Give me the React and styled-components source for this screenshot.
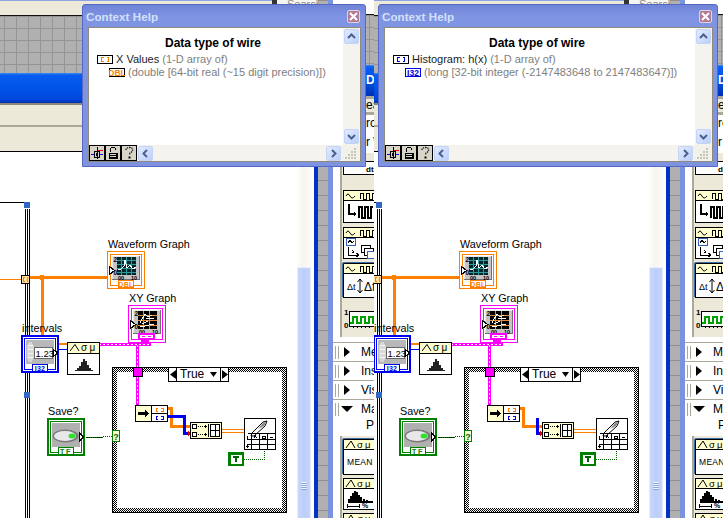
import React from "react";
import styled, { createGlobalStyle } from "styled-components";

const Global = createGlobalStyle`
  html, body { margin: 0; padding: 0; background: #fff; overflow: hidden; }
  #root { width: 723px; height: 518px; }
  * { box-sizing: border-box; }
`;
const UI = `"Liberation Sans", Arial, sans-serif`;
const TOP = 151;

const Page = styled.div`
  display: flex; width: 723px; height: 518px; overflow: hidden; font-family: ${UI}; background: #fff;
`;
const Panel = styled.section`
  position: relative; flex: 0 0 ${p => p.$w}px; width: ${p => p.$w}px; height: 518px; overflow: hidden; display: flex;
`;

/* ---------- background window strips ---------- */
const DiagramColumn = styled.div`
  flex: 0 0 ${p => p.$w}px; width: ${p => p.$w}px; height: 518px; display: flex; flex-direction: column; overflow: hidden;
`;
const MenuBand = styled.div`
  height: 16px; flex: none; background: #ece9d8; border-top: 1px solid #8ea2e6; border-bottom: 1px solid #111;
`;
const SearchHint = styled.span`
  position: absolute; left: ${p => p.$x}px; top: 0; width: 46px; height: 4px; padding-left: 10px; font-size: 11px; line-height: 9px; color: #8a8a8a; background: #f6f5ef;
  white-space: nowrap; overflow: hidden; border-left: 5px solid #333;
`;
const GridBand = styled.div`
  height: 57px; flex: none; background-color: #b0b0b0;
  background-image: linear-gradient(#949494 1px, transparent 1px), linear-gradient(90deg, #949494 1px, transparent 1px);
  background-size: 12px 12px; background-position: 4px 0;
`;
const BlueBand = styled.div`
  height: 30px; flex: none; background: linear-gradient(#3a8cf5 0, #0a5cf0 2px, #0054e6 50%, #0048dc 88%, #0030b0 100%);
`;
const RuleBand = styled.div`
  height: ${p => p.$h}px; flex: none; background: #ece9d8; border-top: 2px solid ${p => p.$line};
`;
const Canvas = styled.div`
  position: relative; flex: none; width: 296px; height: ${518 - TOP}px; margin-left: ${p => p.$shift}px; background: #fff;
  border-top: 1px solid #000;
`;
const WireLayer = styled.svg`
  position: absolute; left: 0; top: -1px; width: 296px; height: ${518 - TOP}px; display: block; shape-rendering: crispEdges;
`;

/* ---------- scrollbar & rulers ---------- */
const ScrollColumn = styled.div`
  flex: 0 0 18px; height: 518px; background: linear-gradient(90deg, #fff, #f6f4ec 40%, #fff); display: flex; flex-direction: column; padding-top: 267px;
`;
const ScrollThumb = styled.div`
  flex: 1; width: 14px; margin-left: 1px; background: linear-gradient(90deg, #c8d6fb, #bccdfa 50%, #c5d4fb); border: 1px solid #e8eefe; border-bottom: 0;
  display: flex; flex-direction: column; align-items: center; padding-top: 214px; gap: 1px;
`;
const GripLine = styled.i`
  display: block; width: 6px; height: 1px; background: #eef3ff; box-shadow: 0 1px 0 #8ea6e0;
`;
const Stripe = styled.div`
  flex: 0 0 4px; height: 518px; background: #0032c8;
`;
const Ruler = styled.div`
  flex: 0 0 10px; height: 518px; background-color: #b0b0b0;
  background-image: linear-gradient(#8f8f8f 1px, transparent 1px); background-size: 100% 15px;
`;
const Accent = styled.div`
  flex: 0 0 5px; height: 518px; background: #7b92de;
`;

/* ---------- palette ---------- */
const Palette = styled.aside`
  flex: 0 0 60px; width: 60px; height: 518px; background: #fff; display: flex; flex-direction: column; overflow: hidden;
`;
const PaletteGrid = styled.div`
  height: 51px; flex: none; background-color: #b0b0b0; border-top: 1px solid #111;
  background-image: linear-gradient(#949494 1px, transparent 1px), linear-gradient(90deg, #949494 1px, transparent 1px);
  background-size: 12px 12px;
`;
const PaletteTopBlank = styled.div`
  height: 14px; flex: none; background: #fff;
`;
const PaletteBlue = styled.div`
  height: 31px; flex: none; background: linear-gradient(#3a8cf5 0, #0a5cf0 2px, #0054e6 50%, #0030b0 100%);
  color: #fff; font-size: 12px; font-weight: bold; line-height: 31px; padding-left: 33px; white-space: nowrap; overflow: hidden;
`;
const PaletteText = styled.div`
  height: ${p => p.$h}px; flex: none; background: ${p => p.$bg}; border-bottom: ${p => (p.$rule ? "3px solid #aca899" : "0")};
  font-size: 12px; line-height: ${p => p.$h - 3}px; color: #000; padding-left: 33px; white-space: nowrap; overflow: hidden;
`;
const Section = styled.div`
  flex: none; background: #ece9d8; border-left: 2px solid #aca899; margin-left: ${p => p.$m}px; padding: 3px 0 0 ${p => p.$pl}px;
  display: flex; flex-direction: column; height: ${p => p.$h}px; overflow: hidden;
`;
const Card = styled.div`
  width: 60px; height: ${p => p.$h}px; flex: none; background: #fff; border: 1px solid #000; border-right: 0;
  margin-top: ${p => p.$mt}px;
  display: flex; flex-direction: column;
  ${p => p.$sel && `box-shadow: -1px -1px 0 #3a6ea5; border-radius: 2px 0 0 0;`}
`;
const CardHead = styled.div`
  height: 10px; flex: none; background: #ffffd0; border-bottom: 1px solid #000; display: flex;
`;
const CardBody = styled.div`
  flex: 1; display: flex; align-items: center; padding-left: 2px; min-height: 0;
`;
const MeanText = styled.span`
  font-size: 8.5px; letter-spacing: 0.3px; padding-left: 1px; color: #000;
`;
const PlotTile = styled.div`
  width: 60px; height: 35px; flex: none; background: #ece9d8; display: flex; align-items: center; margin-top: 2px;
`;
const SubPalette = styled.div`
  flex: none; height: 19px; border-top: 1px solid #aca899; background: #fff; display: flex; align-items: center; padding-left: 2px; overflow: hidden;
`;
const Bars = styled.i`
  display: block; width: 4px; height: 13px; border-left: 1px solid #aca899; border-right: 1px solid #aca899; flex: none;
`;
const Tri = styled.i`
  display: block; flex: none; margin-left: 5px; width: 0; height: 0;
  ${p => p.$open
    ? `border-left: 6px solid transparent; border-right: 6px solid transparent; border-top: 6px solid #000; margin-left: 2px; margin-right: 3px;`
    : `border-top: 5px solid transparent; border-bottom: 5px solid transparent; border-left: 6px solid #000; margin-right: 6px;`}
`;
const SubLabel = styled.span`
  font-size: 12px; padding-left: 5px; white-space: nowrap; color: #000;
`;
const SubLeaf = styled.div`
  flex: none; height: 18px; padding-left: 28px; display: flex; background: #fff;
`;
const Spacer = styled.div`
  flex: none; height: ${p => p.$h}px; background: ${p => p.$bg || "#fff"};
`;

/* ---------- diagram nodes ---------- */
const Node = styled.div`
  position: absolute; left: ${p => p.$x}px; top: ${p => p.$y - TOP - 1}px; width: ${p => p.$w}px; height: ${p => p.$h}px; line-height: 0;
  svg { display: block; }
`;
const NodeLabel = styled.span`
  position: absolute; left: ${p => p.$x}px; top: ${p => p.$y - TOP - 1}px; font-size: 10.8px; line-height: 14px; color: #000; white-space: nowrap;
`;
const CaseFrame = styled.div`
  position: absolute; left: 112px; top: ${367 - TOP - 1}px; width: 175px; height: 146px; border: 1px solid #000; padding: 4px;
  background: conic-gradient(#000 25%, #fff 0 50%, #000 0 75%, #fff 0) 0 0 / 2px 2px;
`;
const CaseInner = styled.div`
  width: 100%; height: 100%; background: #fff;
`;
const Selector = styled.div`
  position: absolute; left: 168px; top: ${367 - TOP - 1}px; width: 61px; height: 15px; background: #fff; border: 1px solid #000; display: flex; align-items: stretch;
`;
const SelArrow = styled.span`
  flex: 0 0 8px; display: flex; align-items: center; justify-content: center; background: #fff;
  border-${p => (p.$right ? "left" : "right")}: 1px solid #000;
`;
const SelText = styled.span`
  flex: 1; font-size: 12px; line-height: 13px; padding-left: 3px; display: flex; justify-content: space-between; align-items: center; padding-right: 3px;
`;

/* ---------- help window ---------- */
const HelpWindow = styled.div`
  position: absolute; left: ${p => p.$x}px; top: 4px; width: ${p => p.$w}px; height: 163px; padding: 0 4px 4px 5px;
  background: linear-gradient(#6f84d8, #7f94e2 12px, #7e92e0); border: 1px solid #5468c4; border-radius: 3px 3px 0 0;
  display: flex; flex-direction: column;
`;
const HelpTitle = styled.header`
  height: 22px; flex: none; display: flex; align-items: center; justify-content: space-between; padding: 2px 1px 0 0; margin-left: -2px;
`;
const HelpTitleText = styled.span`
  font-size: 11.5px; font-weight: bold; color: #d3e0fa; letter-spacing: 0.1px;
`;
const CloseBox = styled.span`
  width: 13px; height: 13px; margin-top: -2px; background: #b27a94; border: 1px solid #e3d3e0; border-radius: 2px; display: flex; align-items: center; justify-content: center;
`;
const HelpBody = styled.div`
  flex: 1; min-height: 0; background: #f5f4ee; border: 1px solid #8e8b7c; display: flex; flex-direction: column;
`;
const HelpMain = styled.div`
  flex: 1; min-height: 0; display: flex;
`;
const HelpContent = styled.div`
  flex: 1; background: #fff; padding: 8px 0 0 8px; font-size: 11px; color: #808080;
`;
const HelpHeading = styled.h4`
  margin: 0 0 3px; padding-right: 14px; text-align: center; font-size: 12px; line-height: 14px; font-weight: bold; color: #000;
`;
const HelpRow = styled.div`
  display: flex; align-items: center; height: 13px; white-space: nowrap; margin-left: ${p => p.$indent}px; gap: 3px; line-height: 13px;
`;
const Dark = styled.span`
  color: #222;
`;
const VBar = styled.div`
  flex: 0 0 17px; background: #f4f3ee; display: flex; flex-direction: column; justify-content: space-between; padding: 1px 0 1px 1px;
`;
const ScrollBtn = styled.span`
  width: 15px; height: 15px; background: linear-gradient(135deg, #e3ebfe, #bccffb); border: 1px solid #c4d4f8; border-radius: 2px; display: flex; align-items: center; justify-content: center; flex: none;
`;
const HelpFoot = styled.div`
  height: 16px; flex: none; display: flex; align-items: center; background: #f2f1ea;
`;
const ToolBtn = styled.span`
  width: 16px; height: 16px; flex: none; background: #d8d5c8; border: 1px solid #000; margin-right: ${p => (p.$last ? "1px" : "0")};
  line-height: 0;
`;
const HTrack = styled.div`
  flex: 1; display: flex; justify-content: space-between; padding-right: 1px; background: #f4f3ee;
`;
const ResizeGrip = styled.span`
  flex: 0 0 18px; height: 16px; display: flex; align-items: center; justify-content: center; line-height: 0;
`;

/* ---------- drawings ---------- */
const Chevron = ({ dir }) => {
  const d = { up: "M3 8 L6.5 4.5 L10 8", down: "M3 5 L6.5 8.5 L10 5", left: "M8 3 L4.5 6.5 L8 10", right: "M5 3 L8.5 6.5 L5 10" }[dir];
  return (
    <svg width="13" height="13" viewBox="0 0 13 13"><path d={d} fill="none" stroke="#4a618f" strokeWidth="2" /></svg>
  );
};
const ArrayTag = ({ color, w = 16, inner }) => (
  <svg width={w} height="9" viewBox={`0 0 ${w} 9`} shapeRendering="crispEdges" style={{ flex: "none" }}>
    <rect x=".5" y=".5" width={w - 1} height="8" fill="#fff" stroke={inner && color !== "#ff8000" ? color : "#000"} />
    {inner ? (
      <text x={w / 2} y="7.8" textAnchor="middle" fontFamily={UI} fontSize="8.5" fontWeight="bold" fill={color}>{inner}</text>
    ) : (
      <path d={`M6.5 2.5 H4.5 V6.5 H6.5 M${w - 6.5} 2.5 H${w - 4.5} V6.5 H${w - 6.5}`} fill="none" stroke={color} strokeWidth="1" />
    )}
  </svg>
);
const WireIcon = () => (
  <svg width="14" height="14" viewBox="0 0 14 14" shapeRendering="crispEdges">
    <path d="M1 8.5 H13" stroke="#00f" /><path d="M7 4.5 H13" stroke="#e00" />
    <rect x="4.5" y="5.5" width="5" height="6" fill="#d8d5c8" stroke="#000" /><rect x="6" y="7" width="2" height="3" fill="#000" />
    <path d="M7 1 V13" stroke="#000" />
  </svg>
);
const LockIcon = () => (
  <svg width="14" height="14" viewBox="0 0 14 14" shapeRendering="crispEdges">
    <path d="M4.5 6 V3.5 Q4.5 1.5 7 1.5 Q9.5 1.5 9.5 3.5" fill="none" stroke="#000" />
    <rect x="2.5" y="6.5" width="9" height="6" fill="#000" /><path d="M4 8.5 H10 M4 10.5 H10" stroke="#d8d5c8" />
  </svg>
);
const HelpIcon = () => (
  <svg width="14" height="14" viewBox="0 0 14 14">
    <path d="M4 4 Q4 1.5 7.5 1.5 Q11 1.5 10.5 4.5 Q10 6 8 7 L7.5 9" fill="none" stroke="#222" strokeWidth="1.4" strokeDasharray="1.4 .8" />
    <rect x="6.5" y="10.5" width="2" height="2" fill="#000" />
  </svg>
);
const Grip = () => (
  <svg width="12" height="12" viewBox="0 0 12 12" fill="#c6c4b6" shapeRendering="crispEdges">
    <rect x="9" y="1" width="2" height="2" /><rect x="6" y="4" width="2" height="2" /><rect x="9" y="4" width="2" height="2" />
    <rect x="3" y="7" width="2" height="2" /><rect x="6" y="7" width="2" height="2" /><rect x="9" y="7" width="2" height="2" />
    <rect x="0" y="10" width="2" height="2" /><rect x="3" y="10" width="2" height="2" /><rect x="6" y="10" width="2" height="2" /><rect x="9" y="10" width="2" height="2" />
  </svg>
);
const XMark = () => (
  <svg width="9" height="9" viewBox="0 0 9 9"><path d="M1 1 L8 8 M8 1 L1 8" stroke="#fff" strokeWidth="2.2" /></svg>
);

const GraphTerminal = ({ color, grid, plot, tag, pink }) => (
  <svg width="38" height="38" viewBox="0 0 38 38" shapeRendering="crispEdges" fontFamily={UI}>
    <rect x=".5" y=".5" width="37" height="37" fill="#fff" stroke={color} />
    <rect x="3.5" y="3.5" width="31" height="31" fill="#fff" stroke={color} />
    <rect x="5" y="5" width="28" height="24" fill="#c4c4c4" />
    <path d="M5 5 H33 M5 5 V29" stroke="#e8e8e8" /><path d="M32.5 5 V29 M5 28.5 H33" stroke="#707070" />
    <rect x="10" y="6" width="19" height="18" fill={pink ? "#000" : "#00282c"} />
    <path d={grid} stroke={pink ? "#e88a3c" : "#2c9c9c"} fill="none" />
    <path d={plot} stroke="#fff" fill="none" />
    <text x="6.5" y="11" fontSize="6.5" fontWeight="bold">2</text>
    <text x="6.5" y="24" fontSize="6.5" fontWeight="bold">0</text>
    <text x="11" y="29" fontSize="5.5" fontWeight="bold">00</text><text x="24" y="29" fontSize="5.5" fontWeight="bold">10</text>
    <path d="M2.5 15.5 L7.5 19.5 L2.5 23.5 Z" fill="#fff" stroke="#000" />
    {tag && (<g><rect x="11.5" y="29.5" width="15" height="7" fill="#fff" stroke={color} /><text x="19" y="36" textAnchor="middle" fontSize="7" fontWeight="bold" fill={color} letterSpacing=".3">{tag}</text></g>)}
    {pink && (<g><rect x="11" y="29" width="15" height="5" fill="#fff" stroke="#ff00ff" strokeWidth="2" /><path d="M14 31.5 H17 M20 31.5 H23" stroke="#ff00ff" /><rect x="13" y="34" width="8" height="4" fill="#ff00ff" /></g>)}
  </svg>
);
const NumericTerminal = () => (
  <svg width="38" height="38" viewBox="0 0 38 38" shapeRendering="crispEdges" fontFamily={UI}>
    <rect x="1" y="1" width="36" height="36" fill="#fff" stroke="#0000f0" strokeWidth="2" />
    <rect x="3.5" y="3.5" width="31" height="31" fill="#fff" stroke="#0000f0" />
    <rect x="5" y="5" width="28" height="24" fill="#b8b8b8" />
    <ellipse cx="9.5" cy="17" rx="4" ry="10" fill="#d8d8d8" /><path d="M7 10 H12 M7 14 H12 M7 18 H12 M7 22 H12" stroke="#f4f4f4" />
    <rect x="13.5" y="12.5" width="18" height="11" fill="#fff" stroke="#666" />
    <text x="14.5" y="21.5" fontSize="9.5" fill="#000">1.23</text>
    <path d="M32.5 14.5 L36.5 18 L32.5 21.5 Z" fill="#fff" stroke="#000" />
    <rect x="11.5" y="29.5" width="15" height="7" fill="#fff" stroke="#0000f0" />
    <text x="19" y="36" textAnchor="middle" fontSize="7" fontWeight="bold" fill="#0000f0" letterSpacing=".3">I32</text>
  </svg>
);
const BoolTerminal = () => (
  <svg width="38" height="38" viewBox="0 0 38 38" shapeRendering="crispEdges" fontFamily={UI}>
    <rect x="1" y="1" width="36" height="36" fill="#fff" stroke="#008000" strokeWidth="2" />
    <rect x="3.5" y="3.5" width="31" height="31" fill="#fff" stroke="#008000" />
    <rect x="5" y="5" width="28" height="24" fill="#b0b0b0" />
    <ellipse cx="18.5" cy="18" rx="13" ry="6.5" fill="#7a7a7a" shapeRendering="auto" />
    <ellipse cx="18" cy="18" rx="11" ry="5" fill="#e8e8e8" shapeRendering="auto" />
    <ellipse cx="25" cy="18" rx="3.5" ry="2.5" fill="#30e030" shapeRendering="auto" />
    <path d="M32.5 15 L36.5 19 L32.5 23 Z" fill="#fff" stroke="#000" />
    <rect x="11.5" y="29.5" width="15" height="7" fill="#fff" stroke="#008000" />
    <text x="19" y="36" textAnchor="middle" fontSize="7" fontWeight="bold" fill="#008000" letterSpacing="1.6">TF</text>
  </svg>
);
const StatsNode = () => (
  <svg width="33" height="33" viewBox="0 0 33 33" shapeRendering="crispEdges" fontFamily={UI}>
    <rect x=".5" y=".5" width="32" height="32" fill="#fff" stroke="#000" />
    <rect x="1" y="1" width="31" height="10" fill="#ffffd0" /><path d="M0 11.5 H33" stroke="#000" />
    <path d="M3 9 L8 2.5 L12 9" fill="none" stroke="#000" shapeRendering="auto" />
    <text x="14" y="9" fontSize="10">σ</text><text x="22.5" y="9" fontSize="10">μ</text>
    <path d="M8 28.5 H26 M11 28 V26 M13 28 V24 M15 28 V20 M17 28 V17 M19 28 V19 M21 28 V23 M23 28 V26" stroke="#222" strokeWidth="1.2" />
  </svg>
);
const Unbundle = () => (
  <svg width="33" height="17" viewBox="0 0 33 17" shapeRendering="crispEdges">
    <rect x=".5" y=".5" width="32" height="16" fill="#ffffd0" stroke="#000" />
    <rect x="16.5" y=".5" width="16" height="16" fill="#fff" stroke="#000" /><path d="M16 8.5 H33" stroke="#000" />
    <path d="M3 7 H10 V4 L14 8.5 L10 13 V10 H3 Z" fill="#000" />
    <path d="M23 3 H21 V6 H23 M26 3 H28 V6 H26" fill="none" stroke="#ff8000" />
    <path d="M23 11 H21 V14 H23 M26 11 H28 V14 H26" fill="none" stroke="#0000f0" />
  </svg>
);
const BuildNode = () => (
  <svg width="32" height="17" viewBox="0 0 32 17" shapeRendering="crispEdges">
    <rect x=".5" y=".5" width="31" height="16" fill="#ffffd0" stroke="#000" />
    <rect x="2.5" y="2.5" width="4" height="4" fill="#fff" stroke="#000" /><rect x="2.5" y="10.5" width="4" height="4" fill="#fff" stroke="#000" />
    <path d="M8 4.5 H14 M8 12.5 H14" stroke="#000" strokeDasharray="1 1" />
    <path d="M15 3 V6 M13.5 4.5 H16.5 M15 11 V14 M13.5 12.5 H16.5" stroke="#000" />
    <path d="M18.5 2 V15" stroke="#000" />
    <rect x="20.5" y="2.5" width="9" height="12" fill="#fff" stroke="#000" /><path d="M25 2 V15 M20 8.5 H30" stroke="#000" />
  </svg>
);
const WriteNode = () => (
  <svg width="32" height="32" viewBox="0 0 32 32" shapeRendering="crispEdges" fontFamily={UI}>
    <rect x=".5" y=".5" width="31" height="31" fill="#fff" stroke="#000" />
    <path d="M8 15 L19 4 L23 3 L21 8 L10 18 L7 18 Z" fill="#fff" stroke="#000" shapeRendering="auto" />
    <path d="M14 11 L19 5 L22 4 L20 8 Z" fill="#888" shapeRendering="auto" />
    <path d="M4 15.5 H32 M4 21.5 H32 M4 26.5 H32 M7.5 15 V32 M15.5 15 V32 M23.5 15 V32" stroke="#000" />
    <path d="M3 18 V22 M2 28 H5 M3.5 26 V30" stroke="#000" />
    <path d="M10 20 L11.5 18 L13 20 M18 18 H21 V20 H18 Z M26 19 H29" stroke="#000" fill="none" />
  </svg>
);
const TrueConst = () => (
  <svg width="16" height="14" viewBox="0 0 16 14" shapeRendering="crispEdges" fontFamily={UI}>
    <rect x="0" y="0" width="16" height="14" fill="#008000" />
    <rect x="2.5" y="2.5" width="11" height="9" fill="#fff" />
    <path d="M5 4.5 H11 M8 4.5 V10" stroke="#006000" strokeWidth="2" />
  </svg>
);
const SelectTunnel = () => (
  <svg width="8" height="12" viewBox="0 0 8 12" fontFamily={UI} shapeRendering="crispEdges">
    <rect x=".5" y=".5" width="7" height="11" fill="#ffffd0" stroke="#008000" />
    <text x="4" y="9.5" fontSize="9" textAnchor="middle" fontWeight="bold" fill="#006000">?</text>
  </svg>
);
const OrangeTunnel = () => (
  <svg width="9" height="9" viewBox="0 0 9 9" shapeRendering="crispEdges">
    <rect x=".5" y=".5" width="8" height="8" fill="#ffe0a0" stroke="#000" />
    <path d="M3.5 2.5 H2.5 V6.5 H3.5 M5.5 2.5 H6.5 V6.5 H5.5" stroke="#ff8000" fill="none" />
  </svg>
);

const Pulse = () => (
  <svg width="58" height="9" viewBox="0 0 58 9" shapeRendering="crispEdges">
    <path d="M2 5 Q4 1 6 5 T11 5" fill="none" stroke="#000" shapeRendering="auto" />
    <path d="M16 8 V2 H19 V8 H22 V2 H25 V8 H28 V2 H30" fill="none" stroke="#000" />
  </svg>
);
const StatHead = () => (
  <svg width="58" height="9" viewBox="0 0 58 9" fontFamily={UI}>
    <path d="M2 8 L7 1 L11 8" fill="none" stroke="#000" />
    <text x="13" y="8" fontSize="9.5">σ</text><text x="21" y="8" fontSize="9.5">μ</text>
  </svg>
);
const Pic1 = () => (
  <svg width="32" height="18" viewBox="0 0 32 18" shapeRendering="crispEdges"><path d="M3 1 V11 H10 M8 9 L10 11 L8 13" fill="none" stroke="#000" strokeWidth="1.2" /><path d="M13 15 V4 H16 V15 H19 V4 H22 V15 H25 V4 H27" fill="none" stroke="#000" strokeWidth="1.2" /></svg>
);
const Pic2 = () => (
  <svg width="32" height="21" viewBox="0 0 32 21" shapeRendering="crispEdges">
    <rect x=".5" y=".5" width="9" height="7" fill="#fff" stroke="#3060c0" /><path d="M2 5 L4 2 L6 5 L8 3" stroke="#000" fill="none" />
    <path d="M2 9 V17 H12 M10 15 L13 17 L10 19 M6 12 L8 14 L6 15" stroke="#000" fill="none" />
    <rect x="15.5" y="7.5" width="9" height="7" fill="#fff" stroke="#000" /><rect x="18.5" y="10.5" width="9" height="7" fill="#fff" stroke="#000" /><rect x="21.5" y="13.5" width="9" height="7" fill="#fff" stroke="#3060c0" />
  </svg>
);
const Pic3 = () => (
  <svg width="32" height="16" viewBox="0 0 32 16" fontFamily={UI}>
    <text x="1" y="12" fontSize="9">Δt</text><path d="M14 1 V15 M11.5 4 L14 1 L16.5 4 M11.5 12 L14 15 L16.5 12" stroke="#000" fill="none" />
    <text x="18" y="13" fontSize="12">Δt</text>
  </svg>
);
const Pic4 = () => (
  <svg width="42" height="24" viewBox="0 0 42 24" shapeRendering="crispEdges" fontFamily={UI}>
    <text x="1" y="9" fontSize="8" fontWeight="bold">1</text><text x="1" y="22" fontSize="8" fontWeight="bold">0</text>
    <rect x="6.5" y="5.5" width="36" height="15" fill="#fff" stroke="#000" />
    <path d="M7 17 H10 V11 H14 V17 H18 V11 H22 V17 H26 V11 H30 V17 H34" fill="none" stroke="#00a000" strokeWidth="1.2" />
    <path d="M10 22 V20 M14 22 V20 M18 22 V20 M22 22 V20 M26 22 V20" stroke="#000" />
  </svg>
);
const PicStat = () => (
  <svg width="32" height="20" viewBox="0 0 32 20" shapeRendering="crispEdges" fontFamily={UI}>
    <path d="M2 13 H27 M3 12 V10 M5 12 V7 M7 12 V4 M9 12 V2 M11 12 V3 M13 12 V6 M15 12 V8 M18 12 V10 M21 12 V11" stroke="#000" strokeWidth="1.5" />
    <path d="M1 17 H13 M1 15 V19 M13 15 V19" stroke="#000" /><text x="16" y="19" fontSize="7" fontWeight="bold">%</text>
  </svg>
);

const PaletteColumn = ({ letter, textA, textB }) => (
  <Palette>
    <PaletteTopBlank />
    <PaletteGrid />
    <PaletteBlue>{letter}</PaletteBlue>
    <Spacer $h={3} $bg="#aca899" />
    <PaletteText $h={16} $bg="#ece9d8" $rule>{textA}</PaletteText>
    <PaletteText $h={19} $bg="#fff">{textB}</PaletteText>
    <PaletteText $h={19} $bg="#fff">r \</PaletteText>
    <Section $m={7} $pl={1} $h={184}>
      <Card $mt={5} $h={14}><CardBody><svg width="58" height="12" fontFamily={UI}><text x="20" y="10" fontSize="8" fontWeight="bold">dt</text></svg></CardBody></Card>
      <Card $mt={15} $h={33}><CardHead><Pulse /></CardHead><CardBody><Pic1 /></CardBody></Card>
      <Card $mt={4} $h={32}><CardHead><Pulse /></CardHead><CardBody><Pic2 /></CardBody></Card>
      <Card $mt={4} $h={35} $sel><CardHead><Pulse /></CardHead><CardBody><Pic3 /></CardBody></Card>
      <PlotTile><Pic4 /></PlotTile>
    </Section>
    <Spacer $h={5} $bg="#fff" />
    <SubPalette><Bars /><Tri /><SubLabel>Measure</SubLabel></SubPalette>
    <SubPalette><Bars /><Tri /><SubLabel>Instrument</SubLabel></SubPalette>
    <SubPalette><Bars /><Tri /><SubLabel>Vision</SubLabel></SubPalette>
    <SubPalette><Bars /><Tri $open /><SubLabel>Mathematics</SubLabel></SubPalette>
    <SubLeaf>
      <svg width="12" height="16" viewBox="0 0 12 16" shapeRendering="crispEdges"><path d="M1.5 0 V10.5 H10" fill="none" stroke="#000" /></svg>
      <SubLabel>Probability</SubLabel>
    </SubLeaf>
    <Section $m={7} $pl={1} $h={90}>
      <Card $mt={0} $h={36} $sel><CardHead><StatHead /></CardHead><CardBody><MeanText>MEAN</MeanText></CardBody></Card>
      <Card $mt={3} $h={32}><CardHead><StatHead /></CardHead><CardBody><PicStat /></CardBody></Card>
      <Card $mt={3} $h={32}><CardHead><StatHead /></CardHead></Card>
    </Section>
  </Palette>
);

const Help = ({ x, w, name, color, tag, kind }) => (
  <HelpWindow $x={x} $w={w}>
    <HelpTitle>
      <HelpTitleText>Context Help</HelpTitleText>
      <CloseBox><XMark /></CloseBox>
    </HelpTitle>
    <HelpBody>
      <HelpMain>
        <HelpContent>
          <HelpHeading>Data type of wire</HelpHeading>
          <HelpRow $indent={0}><ArrayTag color={color} /><Dark>{name}</Dark><span>(1-D array of)</span></HelpRow>
          <HelpRow $indent={12}><ArrayTag color={color} inner={tag} /><span>{kind}</span></HelpRow>
        </HelpContent>
        <VBar>
          <ScrollBtn><Chevron dir="up" /></ScrollBtn>
          <ScrollBtn><Chevron dir="down" /></ScrollBtn>
        </VBar>
      </HelpMain>
      <HelpFoot>
        <ToolBtn><WireIcon /></ToolBtn>
        <ToolBtn><LockIcon /></ToolBtn>
        <ToolBtn $last><HelpIcon /></ToolBtn>
        <HTrack>
          <ScrollBtn><Chevron dir="left" /></ScrollBtn>
          <ScrollBtn><Chevron dir="right" /></ScrollBtn>
        </HTrack>
        <ResizeGrip><Grip /></ResizeGrip>
      </HelpFoot>
    </HelpBody>
  </HelpWindow>
);

const PinkWire = ({ d }) => (
  <g>
    <path d={d} fill="none" stroke="#ff00ff" strokeWidth="3" />
    <path d={d} fill="none" stroke="#fff" strokeWidth="1" strokeDasharray="2 2" />
  </g>
);

const Wires = ({ broken }) => (
  <WireLayer viewBox={`0 ${TOP} 296 ${518 - TOP}`}>
    <path d="M0 202.5 H24" stroke="#000" />
    <path d="M25.5 209 V392 M27.5 209 V392 M29.5 209 V392 M25.5 398 V518 M27.5 398 V518 M29.5 398 V518" stroke="#000" />
    <rect x="24" y="202" width="6" height="6" fill="#3068c0" />
    <rect x="24" y="392" width="6" height="6" fill="#3068c0" />
    <path d="M0 279.5 H21" stroke="#ff8000" />
    <path d="M30 277.5 H108" stroke="#ff8000" strokeWidth="3" />
    <rect x="40" y="275" width="4" height="5" fill="#ff8000" />
    <path d="M42 278 V336" stroke="#ff8000" strokeWidth="3" />
    <path d="M59 343.5 H67" stroke="#ff8000" strokeWidth="2" />
    <path d="M59 349.5 H67" stroke="#0000e0" strokeWidth="1" />
    <PinkWire d="M99 344.5 H149 V338" />
    <PinkWire d="M137.5 345 V405" />
    <rect x="133" y="367" width="9" height="9" fill="#ff00ff" stroke="#000" />
    <path d="M86 437.5 H103 V436.5 H112" stroke="#006000" strokeDasharray="1 1" />
    <path d="M167 408.5 H171 V426 H190" fill="none" stroke="#ff8000" strokeWidth="3" />
    {broken
      ? <path d="M185 418 V433.5 H190" fill="none" stroke="#0000f0" strokeWidth="3" />
      : <path d="M167 416.5 H184.5 V433.5 H190" fill="none" stroke="#0000f0" strokeWidth="3" />}
    <path d="M188 431 L191 433.5 L188 436 Z" fill="#e00000" />
    <path d="M222 429.5 H244 M222 432.5 H244" stroke="#ff8000" />
    <path d="M244 459.5 H264.5 V450" fill="none" stroke="#006000" strokeDasharray="1 1" />
  </WireLayer>
);

const Diagram = ({ shift, broken }) => (
  <Canvas $shift={shift}>
    <CaseFrame><CaseInner /></CaseFrame>
    <Wires broken={broken} />
    <Selector>
      <SelArrow><svg width="6" height="9"><path d="M6 0 V9 L0 4.5 Z" /></svg></SelArrow>
      <SelText>True<svg width="7" height="5"><path d="M0 0 H7 L3.5 5 Z" /></svg></SelText>
      <SelArrow $right><svg width="6" height="9"><path d="M0 0 V9 L6 4.5 Z" /></svg></SelArrow>
    </Selector>
    <NodeLabel $x={108} $y={237}>Waveform Graph</NodeLabel>
    <Node $x={107} $y={251} $w={38} $h={38}>
      <GraphTerminal color="#ff8000" tag="DBL"
        grid="M10 9.5 H29 M10 13.5 H29 M10 17.5 H29 M10 21.5 H29 M14.5 6 V24 M19.5 6 V24 M24.5 6 V24"
        plot="M11 19 L14 18 L17 15 L18 9 L20 17 L23 14 L26 18 L29 16" />
    </Node>
    <NodeLabel $x={129} $y={291}>XY Graph</NodeLabel>
    <Node $x={128} $y={305} $w={38} $h={40}>
      <GraphTerminal color="#ff00ff" pink
        grid="M10 10.5 H29 M10 15.5 H29 M10 20.5 H29 M15.5 6 V24 M21.5 6 V24"
        plot="M12 18 L17 9 L20 12 L24 10 M12 22 L26 19 M18 13 L26 14 M14 19 L20 16" />
    </Node>
    <NodeLabel $x={22} $y={321}>intervals</NodeLabel>
    <Node $x={21} $y={335} $w={38} $h={38}><NumericTerminal /></Node>
    <Node $x={21} $y={275} $w={9} $h={9}><OrangeTunnel /></Node>
    <Node $x={67} $y={342} $w={33} $h={33}><StatsNode /></Node>
    <NodeLabel $x={48} $y={404}>Save?</NodeLabel>
    <Node $x={47} $y={418} $w={38} $h={38}><BoolTerminal /></Node>
    <Node $x={112} $y={430} $w={8} $h={12}><SelectTunnel /></Node>
    <Node $x={135} $y={405} $w={33} $h={17}><Unbundle /></Node>
    <Node $x={190} $y={422} $w={32} $h={17}><BuildNode /></Node>
    <Node $x={244} $y={418} $w={32} $h={32}><WriteNode /></Node>
    <Node $x={228} $y={452} $w={16} $h={14}><TrueConst /></Node>
  </Canvas>
);

const Strips = ({ w, shift, broken }) => (
  <DiagramColumn $w={w}>
    <MenuBand />
    <GridBand />
    <BlueBand />
    <RuleBand $h={22} $line="#8a8878" />
    <RuleBand $h={26} $line="#aca899" />
    <Diagram shift={shift} broken={broken} />
  </DiagramColumn>
);

const Rails = () => (
  <>
    <ScrollColumn>
      <ScrollThumb><GripLine /><GripLine /><GripLine /><GripLine /></ScrollThumb>
    </ScrollColumn>
    <Stripe />
    <Ruler />
    <Accent />
  </>
);

export default function App() {
  return (
    <Page>
      <Global />
      <Panel $w={374}>
        <Strips w={296} shift={0} />
        <Rails />
        <PaletteColumn letter="D" textA="ea" textB="rc_" />
        <SearchHint $x={272}>Search</SearchHint>
        <Help x={82} w={284} name="X Values" color="#ff8000" tag="DBL" kind="(double [64-bit real (~15 digit precision)])" />
      </Panel>
      <Panel $w={349}>
        <Strips w={274} shift={-22} broken />
        <Rails />
        <PaletteColumn letter="D" textA="ea" textB="rc_" />
        <SearchHint $x={250}>Search</SearchHint>
        <Help x={4} w={340} name="Histogram: h(x)" color="#0000e0" tag="I32" kind="(long [32-bit integer (-2147483648 to 2147483647)])" />
      </Panel>
    </Page>
  );
}
